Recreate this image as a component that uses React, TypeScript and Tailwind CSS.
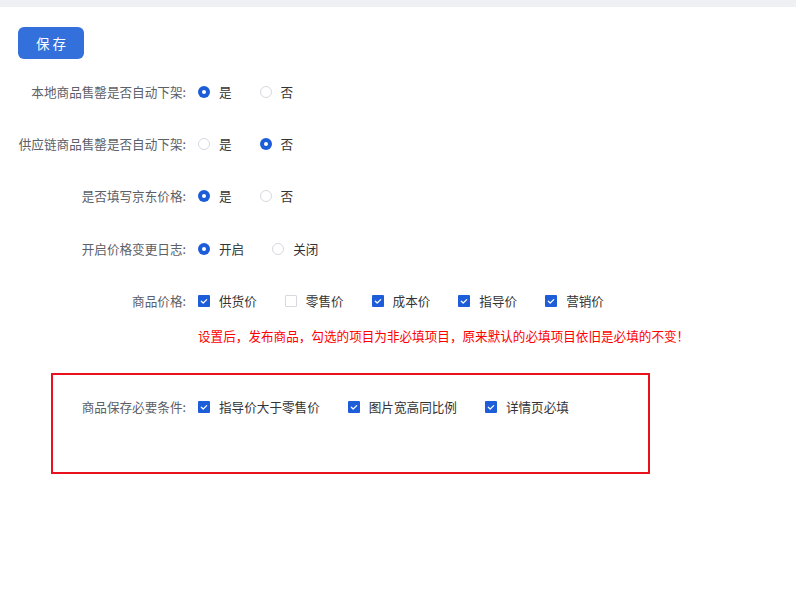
import React from "react";

const font = { fontFamily: '"Noto Sans CJK SC", "Noto Sans", sans-serif' };

function Radio({ checked, label }: { checked: boolean; label: string }) {
  return (
    <div className="flex items-center mr-[28px]">
      {checked ? (
        <span className="w-[12px] h-[12px] rounded-full bg-[#1d5ed8] flex items-center justify-center">
          <span className="w-[4px] h-[4px] rounded-full bg-white" />
        </span>
      ) : (
        <span className="w-[12px] h-[12px] rounded-full border border-[#d6d9e0] bg-white" />
      )}
      <span className="ml-[9px] text-[#333]">{label}</span>
    </div>
  );
}

function Check({ checked, label }: { checked: boolean; label: string }) {
  return (
    <div className="flex items-center mr-[28px]">
      {checked ? (
        <span className="w-[12px] h-[12px] rounded-[1px] bg-[#1d5ed8] flex items-center justify-center">
          <svg width="12" height="12" viewBox="0 0 12 12">
            <path d="M3.3 6.2l1.9 1.8 3.5-3.4" fill="none" stroke="white" strokeWidth="1.2" strokeLinecap="round" strokeLinejoin="round" />
          </svg>
        </span>
      ) : (
        <span className="w-[12px] h-[12px] rounded-[1px] border border-[#d6d9e0] bg-white" />
      )}
      <span className="ml-[9px] text-[#333]">{label}</span>
    </div>
  );
}

function Row({ label, labelW, children, className = "" }: { label: string; labelW: string; children: React.ReactNode; className?: string }) {
  return (
    <div className={"flex items-center h-[32px] " + className}>
      <div className={"text-right text-[#5c6068] shrink-0 whitespace-nowrap " + labelW}>{label}</div>
      <div className="flex items-center ml-[12px]">{children}</div>
    </div>
  );
}

export default function App() {
  return (
    <div className="w-[796px] h-[612px] bg-white text-[12.6px] leading-[20px]" style={font}>
      <div className="h-[7px] bg-[#eff0f4]" />
      <div className="px-[18px] pt-[20px]">
        <button className="w-[66px] h-[32px] rounded-[6px] bg-[#3370dc] text-white text-[13.5px] tracking-[3px] pl-[3px]">
          保存
        </button>
        <div className="flex flex-col gap-[20px] mt-[17px]">
          <Row label="本地商品售罄是否自动下架:" labelW="w-[168px]">
            <Radio checked label="是" />
            <Radio checked={false} label="否" />
          </Row>
          <Row label="供应链商品售罄是否自动下架:" labelW="w-[168px]">
            <Radio checked={false} label="是" />
            <Radio checked label="否" />
          </Row>
          <Row label="是否填写京东价格:" labelW="w-[168px]">
            <Radio checked label="是" />
            <Radio checked={false} label="否" />
          </Row>
          <Row label="开启价格变更日志:" labelW="w-[168px]" className="mt-[1px]">
            <Radio checked label="开启" />
            <Radio checked={false} label="关闭" />
          </Row>
          <Row label="商品价格:" labelW="w-[168px]">
            <Check checked label="供货价" />
            <Check checked={false} label="零售价" />
            <Check checked label="成本价" />
            <Check checked label="指导价" />
            <Check checked label="营销价" />
          </Row>
        </div>
        <div className="ml-[180px] mt-[9px] text-[#ff0000]">
          设置后，发布商品，勾选的项目为非必填项目，原来默认的必填项目依旧是必填的不变！
        </div>
        <div className="ml-[33px] mt-[27px] w-[599px] h-[101px] border-2 border-[#e8111c] pt-[16px]">
          <Row label="商品保存必要条件:" labelW="w-[133px]">
            <Check checked label="指导价大于零售价" />
            <Check checked label="图片宽高同比例" />
            <Check checked label="详情页必填" />
          </Row>
        </div>
      </div>
    </div>
  );
}
